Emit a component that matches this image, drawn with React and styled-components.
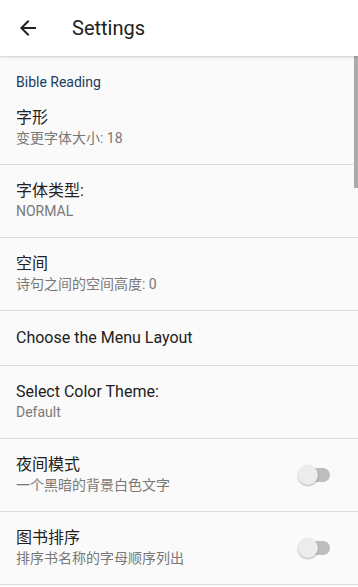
import React from 'react';
import styled, { createGlobalStyle } from 'styled-components';

const GlobalStyle = createGlobalStyle`
  html, body {
    margin: 0;
    padding: 0;
    background: #fafafa;
    font-family: Roboto, "Noto Sans CJK SC", "Noto Sans", sans-serif;
  }
  * { box-sizing: border-box; }
`;

const Screen = styled.div`
  position: relative;
  width: 358px;
  height: 587px;
  overflow: hidden;
  background: #fafafa;
`;

const AppBar = styled.header`
  position: relative;
  z-index: 2;
  display: flex;
  align-items: center;
  height: 56px;
  padding: 0 16px;
  background: #ffffff;
  box-shadow: 0 1px 3px rgba(0, 0, 0, 0.12), 0 1px 2px rgba(0, 0, 0, 0.08);
`;

const BackButton = styled.div`
  display: flex;
  width: 24px;
  height: 24px;
  color: #212121;
`;

const BarTitle = styled.h1`
  margin: 0 0 0 32px;
  font-size: 20px;
  font-weight: 400;
  color: #212121;
  line-height: 24px;
`;

const Content = styled.main`
  display: flex;
  flex-direction: column;
`;

const SectionHeader = styled.div`
  padding: 16px 16px 0;
  font-size: 14px;
  line-height: 20px;
  color: #1c3b62;
`;

const Row = styled.div`
  display: flex;
  align-items: center;
  padding: ${p => (p.$single ? '17px 28px 17px 16px' : '16px 28px 16px 16px')};
  border-bottom: ${p => (p.$noBorder ? 'none' : '1px solid #dcdcdc')};
`;

const Texts = styled.div`
  flex: 1;
  display: flex;
  flex-direction: column;
`;

const Title = styled.div`
  font-size: 16px;
  line-height: 20px;
  color: #212121;
`;

const Summary = styled.div`
  font-size: 14px;
  line-height: 20px;
  color: #787878;
`;

const Switch = styled.div`
  position: relative;
  width: 32px;
  height: 20px;
  display: flex;
  align-items: center;
`;

const Track = styled.div`
  width: 30px;
  height: 14px;
  margin-left: 2px;
  border-radius: 7px;
  background: #bdbdbd;
`;

const Thumb = styled.div`
  position: absolute;
  left: 0;
  top: 0;
  width: 20px;
  height: 20px;
  border-radius: 50%;
  background: #ececec;
  box-shadow: 0 1px 2px rgba(0, 0, 0, 0.3);
`;

const Scrollbar = styled.div`
  position: absolute;
  right: 0;
  top: 56px;
  width: 4px;
  height: 132px;
  background: #ababab;
`;

const rows = [
  { title: '字形', summary: '变更字体大小: 18' },
  { title: '字体类型:', summary: 'NORMAL' },
  { title: '空间', summary: '诗句之间的空间高度: 0' },
  { title: 'Choose the Menu Layout' },
  { title: 'Select Color Theme:', summary: 'Default' },
  { title: '夜间模式', summary: '一个黑暗的背景白色文字', toggle: true },
  { title: '图书排序', summary: '排序书名称的字母顺序列出', toggle: true },
];

export default function App() {
  return (
    <Screen>
      <GlobalStyle />
      <AppBar>
        <BackButton>
          <svg width="24" height="24" viewBox="0 0 24 24" fill="currentColor">
            <path d="M20 11H7.83l5.59-5.59L12 4l-8 8 8 8 1.41-1.41L7.83 13H20v-2z" />
          </svg>
        </BackButton>
        <BarTitle>Settings</BarTitle>
      </AppBar>
      <Content>
        <SectionHeader>Bible Reading</SectionHeader>
        {rows.map(r => (
          <Row key={r.title} $single={!r.summary}>
            <Texts>
              <Title>{r.title}</Title>
              {r.summary && <Summary>{r.summary}</Summary>}
            </Texts>
            {r.toggle && (
              <Switch>
                <Track />
                <Thumb />
              </Switch>
            )}
          </Row>
        ))}
      </Content>
      <Scrollbar />
    </Screen>
  );
}
